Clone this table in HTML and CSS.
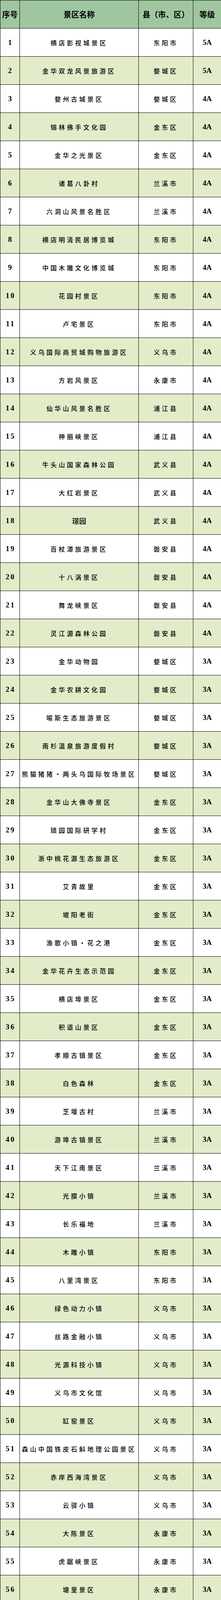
FILE: index.html
```html
<!DOCTYPE html>
<html lang="zh-CN">
<head>
<meta charset="utf-8">
<meta name="viewport" content="width=567">
<title>景区名单</title>
<link rel="stylesheet" href="styles.css">
</head>
<body>
<table class="tbl">
  <colgroup><col class="w-no"><col class="w-nm"><col class="w-ct"><col class="w-gr"></colgroup>
  <thead>
  <tr class="head"><th>序号</th><th>景区名称</th><th>县（市、区）</th><th>等级</th></tr>
  </thead>
  <tbody>
  <tr><td class="no">1</td><td class="nm">横店影视城景区</td><td class="ct">东阳市</td><td class="gr">5A</td></tr>
  <tr class="alt"><td class="no">2</td><td class="nm">金华双龙风景旅游区</td><td class="ct">婺城区</td><td class="gr">5A</td></tr>
  <tr><td class="no">3</td><td class="nm">婺州古城景区</td><td class="ct">婺城区</td><td class="gr">4A</td></tr>
  <tr class="alt"><td class="no">4</td><td class="nm">锦林佛手文化园</td><td class="ct">金东区</td><td class="gr">4A</td></tr>
  <tr><td class="no">5</td><td class="nm">金华之光景区</td><td class="ct">金东区</td><td class="gr">4A</td></tr>
  <tr class="alt"><td class="no">6</td><td class="nm">诸葛八卦村</td><td class="ct">兰溪市</td><td class="gr">4A</td></tr>
  <tr><td class="no">7</td><td class="nm">六洞山风景名胜区</td><td class="ct">兰溪市</td><td class="gr">4A</td></tr>
  <tr class="alt"><td class="no">8</td><td class="nm">横店明清民居博览城</td><td class="ct">东阳市</td><td class="gr">4A</td></tr>
  <tr><td class="no">9</td><td class="nm">中国木雕文化博览城</td><td class="ct">东阳市</td><td class="gr">4A</td></tr>
  <tr class="alt"><td class="no">10</td><td class="nm">花园村景区</td><td class="ct">东阳市</td><td class="gr">4A</td></tr>
  <tr><td class="no">11</td><td class="nm">卢宅景区</td><td class="ct">东阳市</td><td class="gr">4A</td></tr>
  <tr class="alt"><td class="no">12</td><td class="nm">义乌国际商贸城购物旅游区</td><td class="ct">义乌市</td><td class="gr">4A</td></tr>
  <tr><td class="no">13</td><td class="nm">方岩风景区</td><td class="ct">永康市</td><td class="gr">4A</td></tr>
  <tr class="alt"><td class="no">14</td><td class="nm">仙华山风景名胜区</td><td class="ct">浦江县</td><td class="gr">4A</td></tr>
  <tr><td class="no">15</td><td class="nm">神丽峡景区</td><td class="ct">浦江县</td><td class="gr">4A</td></tr>
  <tr class="alt"><td class="no">16</td><td class="nm">牛头山国家森林公园</td><td class="ct">武义县</td><td class="gr">4A</td></tr>
  <tr><td class="no">17</td><td class="nm">大红岩景区</td><td class="ct">武义县</td><td class="gr">4A</td></tr>
  <tr class="alt"><td class="no">18</td><td class="nm tight">璟园</td><td class="ct">武义县</td><td class="gr">4A</td></tr>
  <tr><td class="no">19</td><td class="nm">百杖潭旅游景区</td><td class="ct">磐安县</td><td class="gr">4A</td></tr>
  <tr class="alt"><td class="no">20</td><td class="nm">十八涡景区</td><td class="ct">磐安县</td><td class="gr">4A</td></tr>
  <tr><td class="no">21</td><td class="nm">舞龙峡景区</td><td class="ct">磐安县</td><td class="gr">4A</td></tr>
  <tr class="alt"><td class="no">22</td><td class="nm">灵江源森林公园</td><td class="ct">磐安县</td><td class="gr">4A</td></tr>
  <tr><td class="no">23</td><td class="nm">金华动物园</td><td class="ct">婺城区</td><td class="gr">3A</td></tr>
  <tr class="alt"><td class="no">24</td><td class="nm">金华农耕文化园</td><td class="ct">婺城区</td><td class="gr">3A</td></tr>
  <tr><td class="no">25</td><td class="nm">喻斯生态旅游景区</td><td class="ct">婺城区</td><td class="gr">3A</td></tr>
  <tr class="alt"><td class="no">26</td><td class="nm">南杉温泉旅游度假村</td><td class="ct">婺城区</td><td class="gr">3A</td></tr>
  <tr><td class="no">27</td><td class="nm">熊猫猪猪·两头乌国际牧场景区</td><td class="ct">婺城区</td><td class="gr">3A</td></tr>
  <tr class="alt"><td class="no">28</td><td class="nm">金华山大佛寺景区</td><td class="ct">金东区</td><td class="gr">3A</td></tr>
  <tr><td class="no">29</td><td class="nm">琐园国际研学村</td><td class="ct">金东区</td><td class="gr">3A</td></tr>
  <tr class="alt"><td class="no">30</td><td class="nm">浙中桃花源生态旅游区</td><td class="ct">金东区</td><td class="gr">3A</td></tr>
  <tr><td class="no">31</td><td class="nm">艾青故里</td><td class="ct">金东区</td><td class="gr">3A</td></tr>
  <tr class="alt"><td class="no">32</td><td class="nm">坡阳老街</td><td class="ct">金东区</td><td class="gr">3A</td></tr>
  <tr><td class="no">33</td><td class="nm">渔歌小镇·花之港</td><td class="ct">金东区</td><td class="gr">3A</td></tr>
  <tr class="alt"><td class="no">34</td><td class="nm">金华花卉生态示范园</td><td class="ct">金东区</td><td class="gr">3A</td></tr>
  <tr><td class="no">35</td><td class="nm">横店埠景区</td><td class="ct">金东区</td><td class="gr">3A</td></tr>
  <tr class="alt"><td class="no">36</td><td class="nm">积道山景区</td><td class="ct">金东区</td><td class="gr">3A</td></tr>
  <tr><td class="no">37</td><td class="nm">孝顺古镇景区</td><td class="ct">金东区</td><td class="gr">3A</td></tr>
  <tr class="alt"><td class="no">38</td><td class="nm">白色森林</td><td class="ct">金东区</td><td class="gr">3A</td></tr>
  <tr><td class="no">39</td><td class="nm">芝堰古村</td><td class="ct">兰溪市</td><td class="gr">3A</td></tr>
  <tr class="alt"><td class="no">40</td><td class="nm">游埠古镇景区</td><td class="ct">兰溪市</td><td class="gr">3A</td></tr>
  <tr><td class="no">41</td><td class="nm">天下江南景区</td><td class="ct">兰溪市</td><td class="gr">3A</td></tr>
  <tr class="alt"><td class="no">42</td><td class="nm">光膜小镇</td><td class="ct">兰溪市</td><td class="gr">3A</td></tr>
  <tr><td class="no">43</td><td class="nm">长乐福地</td><td class="ct">兰溪市</td><td class="gr">3A</td></tr>
  <tr class="alt"><td class="no">44</td><td class="nm">木雕小镇</td><td class="ct">东阳市</td><td class="gr">3A</td></tr>
  <tr><td class="no">45</td><td class="nm">八里湾景区</td><td class="ct">东阳市</td><td class="gr">3A</td></tr>
  <tr class="alt"><td class="no">46</td><td class="nm">绿色动力小镇</td><td class="ct">义乌市</td><td class="gr">3A</td></tr>
  <tr><td class="no">47</td><td class="nm">丝路金融小镇</td><td class="ct">义乌市</td><td class="gr">3A</td></tr>
  <tr class="alt"><td class="no">48</td><td class="nm">光源科技小镇</td><td class="ct">义乌市</td><td class="gr">3A</td></tr>
  <tr><td class="no">49</td><td class="nm">义乌市文化馆</td><td class="ct">义乌市</td><td class="gr">3A</td></tr>
  <tr class="alt"><td class="no">50</td><td class="nm">缸窑景区</td><td class="ct">义乌市</td><td class="gr">3A</td></tr>
  <tr><td class="no">51</td><td class="nm">森山中国铁皮石斛地理公园景区</td><td class="ct">义乌市</td><td class="gr">3A</td></tr>
  <tr class="alt"><td class="no">52</td><td class="nm">赤岸西海湾景区</td><td class="ct">义乌市</td><td class="gr">3A</td></tr>
  <tr><td class="no">53</td><td class="nm">云驿小镇</td><td class="ct">义乌市</td><td class="gr">3A</td></tr>
  <tr class="alt"><td class="no">54</td><td class="nm">大陈景区</td><td class="ct">永康市</td><td class="gr">3A</td></tr>
  <tr><td class="no">55</td><td class="nm">虎踞峡景区</td><td class="ct">永康市</td><td class="gr">3A</td></tr>
  <tr class="alt"><td class="no">56</td><td class="nm">塘里景区</td><td class="ct">永康市</td><td class="gr">3A</td></tr>
  <tr><td class="no">57</td><td class="nm">舟山古民居景区</td><td class="ct">永康市</td><td class="gr">3A</td></tr>
  <tr class="alt"><td class="no">58</td><td class="nm">雅吕景区</td><td class="ct">永康市</td><td class="gr">3A</td></tr>
  <tr><td class="no">59</td><td class="nm">象珠古镇景区</td><td class="ct">永康市</td><td class="gr">3A</td></tr>
  <tr class="alt"><td class="no">60</td><td class="nm">秀岩景区</td><td class="ct">永康市</td><td class="gr">3A</td></tr>
  <tr class="tall"><td class="no">61</td><td class="nm">数字五金小镇</td><td class="ct">永康市</td><td class="gr">3A</td></tr>
  <tr class="alt"><td class="no">62</td><td class="nm">嵩溪古村</td><td class="ct">浦江县</td><td class="gr">3A</td></tr>
  <tr><td class="no">63</td><td class="nm">民生花海·罗源梯田景区</td><td class="ct">浦江县</td><td class="gr">3A</td></tr>
  <tr class="alt"><td class="no">64</td><td class="nm">冷坞花谷景区</td><td class="ct">浦江县</td><td class="gr">3A</td></tr>
  <tr><td class="no">65</td><td class="nm">诗人小镇景区</td><td class="ct">浦江县</td><td class="gr">3A</td></tr>
  <tr class="alt"><td class="no">66</td><td class="nm">上山考古遗址景区</td><td class="ct">浦江县</td><td class="gr">3A</td></tr>
  <tr><td class="no">67</td><td class="nm">红色塘波景区</td><td class="ct">浦江县</td><td class="gr">3A</td></tr>
  <tr class="alt"><td class="no">68</td><td class="nm">郭洞风景区</td><td class="ct">武义县</td><td class="gr">3A</td></tr>
  <tr><td class="no">69</td><td class="nm">寿仙谷景区</td><td class="ct">武义县</td><td class="gr">3A</td></tr>
  <tr class="alt"><td class="no">70</td><td class="nm">俞源景区</td><td class="ct">武义县</td><td class="gr">3A</td></tr>
  <tr><td class="no">71</td><td class="nm">十里荷花-江下畲乡景区</td><td class="ct">武义县</td><td class="gr">3A</td></tr>
  <tr class="alt"><td class="no">72</td><td class="nm">骆驼九龙黑茶文化园</td><td class="ct">武义县</td><td class="gr">3A</td></tr>
  <tr><td class="no">73</td><td class="nm">坛头村</td><td class="ct">武义县</td><td class="gr">3A</td></tr>
  <tr class="alt"><td class="no">74</td><td class="nm">秘境·梁家山景区</td><td class="ct">武义县</td><td class="gr">3A</td></tr>
  <tr><td class="no">75</td><td class="nm">花田美地景区</td><td class="ct">武义县</td><td class="gr">3A</td></tr>
  <tr class="alt"><td class="no">76</td><td class="nm">仙客岭景区</td><td class="ct">武义县</td><td class="gr">3A</td></tr>
  <tr><td class="no">77</td><td class="nm">温泉小镇</td><td class="ct">武义县</td><td class="gr">3A</td></tr>
  <tr class="alt"><td class="no">78</td><td class="nm">寿仙谷有机国药养生园</td><td class="ct">武义县</td><td class="gr">3A</td></tr>
  <tr><td class="no">79</td><td class="nm">花溪风景区</td><td class="ct">磐安县</td><td class="gr">3A</td></tr>
  <tr class="alt"><td class="no">80</td><td class="nm">水下孔景区</td><td class="ct">磐安县</td><td class="gr">3A</td></tr>
  <tr><td class="no">81</td><td class="nm">乌石村景区</td><td class="ct">磐安县</td><td class="gr">3A</td></tr>
  <tr class="alt"><td class="no">82</td><td class="nm">江南药镇景区</td><td class="ct">磐安县</td><td class="gr">3A</td></tr>
  <tr><td class="no">83</td><td class="nm">念想双峰景区</td><td class="ct">磐安县</td><td class="gr">3A</td></tr>
  <tr class="alt"><td class="no">84</td><td class="nm">湖上村景区</td><td class="ct">磐安县</td><td class="gr">3A</td></tr>
  <tr><td class="no">85</td><td class="nm">风崖谷景区</td><td class="ct">磐安县</td><td class="gr">3A</td></tr>
  <tr class="alt"><td class="no">86</td><td class="nm">龙灯源景区</td><td class="ct">磐安县</td><td class="gr">3A</td></tr>
  <tr><td class="no">87</td><td class="nm">金鸡岩景区</td><td class="ct">磐安县</td><td class="gr">3A</td></tr>
  <tr class="alt"><td class="no">88</td><td class="nm">大盘山博物馆</td><td class="ct">磐安县</td><td class="gr">3A</td></tr>
  <tr><td class="no">89</td><td class="nm">罗埠老街</td><td class="ct">金华开发区</td><td class="gr">3A</td></tr>
  <tr class="alt"><td class="no">90</td><td class="nm">互联网乐乐小镇</td><td class="ct">金华开发区</td><td class="gr">3A</td></tr>
  <tr><td class="no">91</td><td class="nm">寺平古村</td><td class="ct">金华开发区</td><td class="gr">3A</td></tr>
  <tr class="alt"><td class="no">92</td><td class="nm">新能源汽车小镇</td><td class="ct">金华开发区</td><td class="gr">3A</td></tr>
  <tr><td class="no">93</td><td class="nm">九峰牧场</td><td class="ct">金华开发区</td><td class="gr">3A</td></tr>
  <tr class="alt"><td class="no">94</td><td class="nm">山头下古村</td><td class="ct">金东区</td><td class="gr">2A</td></tr>
  <tr><td class="no">95</td><td class="nm">金华汽车城景区</td><td class="ct">金东区</td><td class="gr">2A</td></tr>
  <tr class="alt"><td class="no">96</td><td class="nm">黄大仙赤松园</td><td class="ct">兰溪市</td><td class="gr">2A</td></tr>
  <tr><td class="no">97</td><td class="nm">新天地生态休闲农场</td><td class="ct">兰溪市</td><td class="gr">2A</td></tr>
  <tr class="alt"><td class="no">98</td><td class="nm">九峰山风景区</td><td class="ct">金华开发区</td><td class="gr">2A</td></tr>
  </tbody>
</table>
</body>
</html>
```

FILE: styles.css
```css
html, body {
  margin: 0;
  padding: 0;
  background: #ffffff;
}

.tbl {
  width: 567px;
  table-layout: fixed;
  border-collapse: collapse;
  border-spacing: 0;
  color: #000;
}

.w-no { width: 50px; }
.w-nm { width: 305px; }
.w-ct { width: 140px; }
.w-gr { width: 72px; }

.tbl tr {
  height: 72px;
  background: #ffffff;
}

.tbl tr.alt {
  background: #e2ecc9;
}

.tbl tr.head {
  background: #a0c6a0;
}

.tbl tr.tall {
  height: 108px;
}

.tbl th,
.tbl td {
  border: 1px solid #000;
  padding: 0;
  text-align: center;
  vertical-align: middle;
  white-space: nowrap;
  line-height: 20px;
}

.tbl th {
  font-family: "Noto Sans CJK SC", sans-serif;
  font-weight: 700;
  font-size: 20px;
}

.no {
  font-family: "Liberation Serif", "Times New Roman", serif;
  font-weight: 700;
  font-size: 19px;
  letter-spacing: 3px;
  text-indent: 3px;
}

.nm, .ct {
  font-family: "Noto Sans CJK SC", sans-serif;
  font-weight: 500;
  font-size: 16px;
  letter-spacing: 5px;
}

.nm.tight {
  letter-spacing: 0;
  font-size: 18px;
}

.gr {
  font-family: "Liberation Serif", "Times New Roman", serif;
  font-weight: 700;
  font-size: 19px;
}
```
